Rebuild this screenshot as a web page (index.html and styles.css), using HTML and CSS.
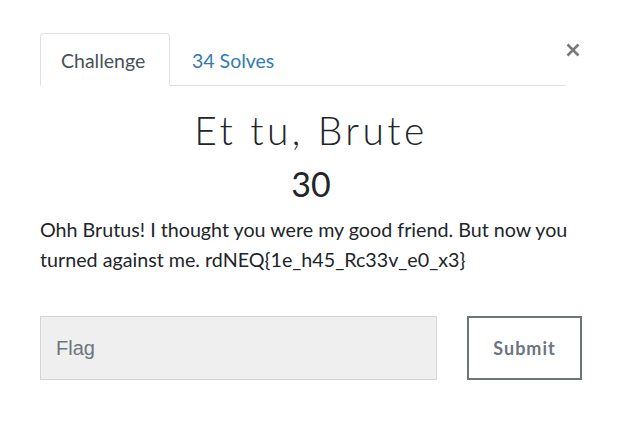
FILE: index.html
```html
<!DOCTYPE html>
<html>
<head>
<meta charset="utf-8">
<link rel="stylesheet" href="styles.css">
</head>
<body>
<div class="modal">
  <button class="close" aria-label="Close">
    <svg width="14" height="14" viewBox="0 0 14 14"><path d="M1.5 1.5 L12.5 12.5 M12.5 1.5 L1.5 12.5" stroke="#7a7a7a" stroke-width="2.6" stroke-linecap="butt"/></svg>
  </button>
  <ul class="tabs">
    <li class="tab active">Challenge</li>
    <li class="tab link">34 Solves</li>
  </ul>
  <h2 class="title">Et tu, Brute</h2>
  <h3 class="value">30</h3>
  <p class="desc">Ohh Brutus! I thought you were my good friend. But now you turned against me. rdNEQ{1e_h45_Rc33v_e0_x3}</p>
  <form class="form">
    <input class="flag" type="text" placeholder="Flag">
    <button class="submit" type="button">Submit</button>
  </form>
</div>
</body>
</html>
```
FILE: styles.css
```css
html, body {
  margin: 0;
  padding: 0;
  background: #fff;
}
body {
  font-family: "Lato", "Liberation Sans", sans-serif;
  color: #212529;
}
.modal {
  position: relative;
  width: 542px;
  padding: 33px 0 0 40px;
}
.close {
  position: absolute;
  left: 566px;
  top: 43px;
  width: 14px;
  height: 14px;
  padding: 0;
  border: 0;
  background: none;
  display: block;
}
.close svg { display: block; }
.tabs {
  list-style: none;
  margin: 0 16px 0 0;
  padding: 0;
  display: flex;
  border-bottom: 1px solid #dee2e6;
  height: 52px;
}
.tab {
  font-size: 19.5px;
  line-height: 55px;
  padding: 0 20px;
  height: 53px;
  box-sizing: border-box;
}
.tab.active {
  color: #495057;
  border: 1px solid #dee2e6;
  border-bottom-color: #fff;
  border-radius: 4px 4px 0 0;
  background: #fff;
  width: 130px;
  line-height: 54px;
}
.tab.link {
  color: #337ab7;
  padding-left: 22px;
}
.title {
  margin: 20px 0 0;
  text-align: center;
  font-family: "Lato", sans-serif;
  font-weight: 300;
  font-size: 39px;
  letter-spacing: 3.4px;
  line-height: 48px;
  color: #212529;
}
.value {
  margin: 9px 0 0;
  text-align: center;
  font-weight: 400;
  font-size: 34px;
  line-height: 42px;
  color: #212529;
}
.desc {
  margin: 10px 0 0;
  font-size: 19.7px;
  line-height: 30px;
  color: #212529;
}
.form {
  display: flex;
  margin-top: 41px;
  gap: 30px;
}
.flag {
  width: 397px;
  height: 64px;
  box-sizing: border-box;
  border: 1px solid #d4d4d4;
  background: #efefef;
  padding: 0 15px;
  font-family: "Liberation Sans", Arial, sans-serif;
  font-size: 20px;
  color: #495057;
  outline: none;
}
.flag::placeholder { color: #6c757d; }
.submit {
  width: 115px;
  height: 64px;
  box-sizing: border-box;
  border: 2px solid #6c757d;
  background: #fff;
  color: #6c757d;
  font-family: "Lato", sans-serif;
  font-weight: 700;
  font-size: 18px;
  letter-spacing: 1px;
}
```
